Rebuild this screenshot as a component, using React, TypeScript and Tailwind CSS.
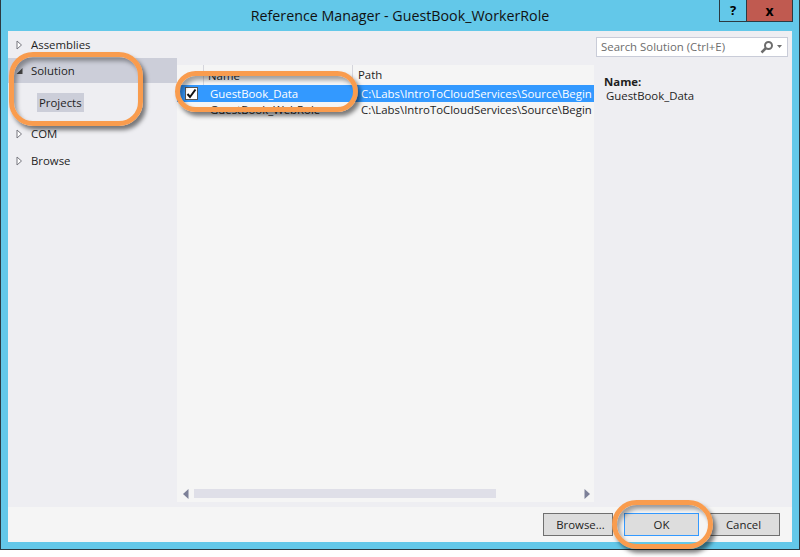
import React from "react";

const font = { fontFamily: '"Open Sans", "Noto Sans", sans-serif' };

function Arrow({ open }: { open?: boolean }) {
  if (open)
    return (
      <svg width="7" height="8" viewBox="0 0 7 8" className="shrink-0">
        <path d="M6.5 1 V7 H0.5 Z" fill="#444444" />
      </svg>
    );
  return (
    <svg width="7" height="10" viewBox="0 0 7 10" className="shrink-0">
      <path d="M1 1 L5.5 5 L1 9 Z" fill="#ffffff" stroke="#77777f" strokeWidth="1" />
    </svg>
  );
}

function TreeRow({ label, open, active }: { label: string; open?: boolean; active?: boolean }) {
  return (
    <div className={`h-[25px] flex items-center pl-[8px] ${active ? "bg-[#ccced9]" : ""}`}>
      <span className="w-[15px] flex items-center">
        <Arrow open={open} />
      </span>
      <span>{label}</span>
    </div>
  );
}

function Ring({ className }: { className: string }) {
  return (
    <div
      className={`absolute border-[5px] border-[#f99c4e] shadow-[3px_4px_4px_rgba(0,0,0,0.5),inset_3px_4px_4px_rgba(0,0,0,0.35)] ${className}`}
    />
  );
}

function Btn({ label, className }: { label: string; className: string }) {
  return (
    <div className={`h-[23px] flex items-center justify-center bg-[#dddddd] border ${className}`}>
      {label}
    </div>
  );
}

export default function App() {
  return (
    <div className="relative w-[800px] h-[557px] bg-white overflow-hidden text-[11.4px] text-[#1e1e1e]" style={font}>
      <div className="w-[800px] h-[550px] bg-[#63c8e9] border-x border-b border-[#2b3a42] flex flex-col">
        <div className="h-[31px] shrink-0 relative flex items-center justify-center text-[14.25px] text-[#111]">
          <span className="pt-[1px]">Reference Manager - GuestBook_WorkerRole</span>
          <div className="absolute right-[6px] top-0 flex h-[22px] border border-t-0 border-[#2b3a42]">
            <div className="w-[27px] flex items-center justify-center font-bold text-[13px] text-black border-r border-[#2b3a42]">?</div>
            <div className="w-[45px] bg-[#c05a50] flex items-center justify-center font-bold text-[14px] text-black">x</div>
          </div>
        </div>
        <div className="mx-[7px] h-[511px] flex flex-col bg-[#eeeef2]">
          <div className="flex-1 flex min-h-0">
            <div className="w-[169px] shrink-0">
              <div className="h-[27px] flex items-center pl-[8px]">
                <span className="w-[15px] flex items-center"><Arrow /></span>
                <span>Assemblies</span>
              </div>
              <TreeRow label="Solution" open active />
              <div className="h-[37px] pl-[29px] pt-[10px]">
                <span className="inline-flex h-[19px] items-center px-[2px] bg-[#ccced9]">Projects</span>
              </div>
              <div className="h-[27px] flex items-center pl-[8px]">
                <span className="w-[15px] flex items-center"><Arrow /></span>
                <span>COM</span>
              </div>
              <div className="h-[27px] flex items-center pl-[8px]">
                <span className="w-[15px] flex items-center"><Arrow /></span>
                <span>Browse</span>
              </div>
            </div>
            <div className="w-[417px] shrink-0 mt-[34px] mb-[5px] bg-[#f5f5f5] flex flex-col overflow-hidden">
              <div className="h-[20px] shrink-0 flex">
                <div className="w-[27px] shrink-0 border-r border-[#d5d5dc]" />
                <div className="w-[149px] shrink-0 pl-[4px] border-r border-[#d5d5dc] leading-[22px]">Name</div>
                <div className="pl-[5px] leading-[19px]">Path</div>
              </div>
              <div className="h-[17px] shrink-0 flex items-center bg-[#3399ff] text-white whitespace-nowrap">
                <div className="w-[27px] shrink-0 pl-[8px] flex items-center">
                  <div className="w-[13px] h-[13px] bg-white border border-[#555] flex items-center justify-center">
                    <svg width="11" height="11" viewBox="0 0 11 11">
                      <path d="M1.5 6 L4 9 L9.5 1.5" fill="none" stroke="#111" strokeWidth="2" />
                    </svg>
                  </div>
                </div>
                <div className="w-[149px] shrink-0 pl-[6px]">GuestBook_Data</div>
                <div className="pl-[8px]">C:\Labs\IntroToCloudServices\Source\Begin</div>
              </div>
              <div className="h-[15px] shrink-0 flex items-center whitespace-nowrap">
                <div className="w-[27px] shrink-0" />
                <div className="w-[149px] shrink-0 pl-[6px]">GuestBook_WebRole</div>
                <div className="pl-[8px]">C:\Labs\IntroToCloudServices\Source\Begin</div>
              </div>
              <div className="flex-1" />
              <div className="h-[14px] shrink-0 flex items-center pb-[3px] pl-[6px] pr-[4px]">
                <svg width="6" height="10" viewBox="0 0 6 10" className="shrink-0">
                  <path d="M5.5 0 V10 L0 5 Z" fill="#7d8098" />
                </svg>
                <div className="ml-[5px] w-[302px] h-[9px] bg-[#dfdfe8]" />
                <div className="flex-1" />
                <svg width="6" height="10" viewBox="0 0 6 10" className="shrink-0">
                  <path d="M0.5 0 V10 L6 5 Z" fill="#7d8098" />
                </svg>
              </div>
            </div>
            <div className="flex-1 min-w-0 pl-[2px] pr-[4px] pt-[6px]">
              <div className="h-[20px] bg-white border border-[#c9ccd8] flex items-center pl-[4px] pr-[3px] text-[#6d6d6d]">
                <span className="flex-1">Search Solution (Ctrl+E)</span>
                <svg width="14" height="14" viewBox="0 0 14 14" className="shrink-0">
                  <circle cx="8.5" cy="5.5" r="3.5" fill="none" stroke="#6d6d6d" strokeWidth="2" />
                  <path d="M6 8 L1.5 12.5" stroke="#6d6d6d" strokeWidth="2.5" />
                </svg>
                <svg width="6" height="4" viewBox="0 0 6 4" className="ml-[3px] mr-[1px] shrink-0">
                  <path d="M0 0 H5 L2.5 3 Z" fill="#6d6d6d" />
                </svg>
              </div>
              <div className="mt-[17px] ml-[8px] font-bold leading-[16px]">Name:</div>
              <div className="ml-[10px] leading-[15px] mt-[-2px]">GuestBook_Data</div>
            </div>
          </div>
          <div className="h-[35px] shrink-0 bg-[#f5f5f5] flex items-start justify-end gap-[11px] pt-[6px] pr-[12px]">
            <Btn label="Browse..." className="w-[70px] pl-[5px] border-[#707070]" />
            <Btn label="OK" className="w-[75px] border-[#3399ff]" />
            <Btn label="Cancel" className="w-[70px] pr-[3px] border-[#707070]" />
          </div>
        </div>
      </div>
      <Ring className="left-[9px] top-[52px] w-[134px] h-[74px] rounded-[24px]" />
      <Ring className="left-[175px] top-[71px] w-[183px] h-[41px] rounded-[21px]" />
      <Ring className="left-[612px] top-[500px] w-[101px] h-[49px] rounded-[25px]" />
    </div>
  );
}
